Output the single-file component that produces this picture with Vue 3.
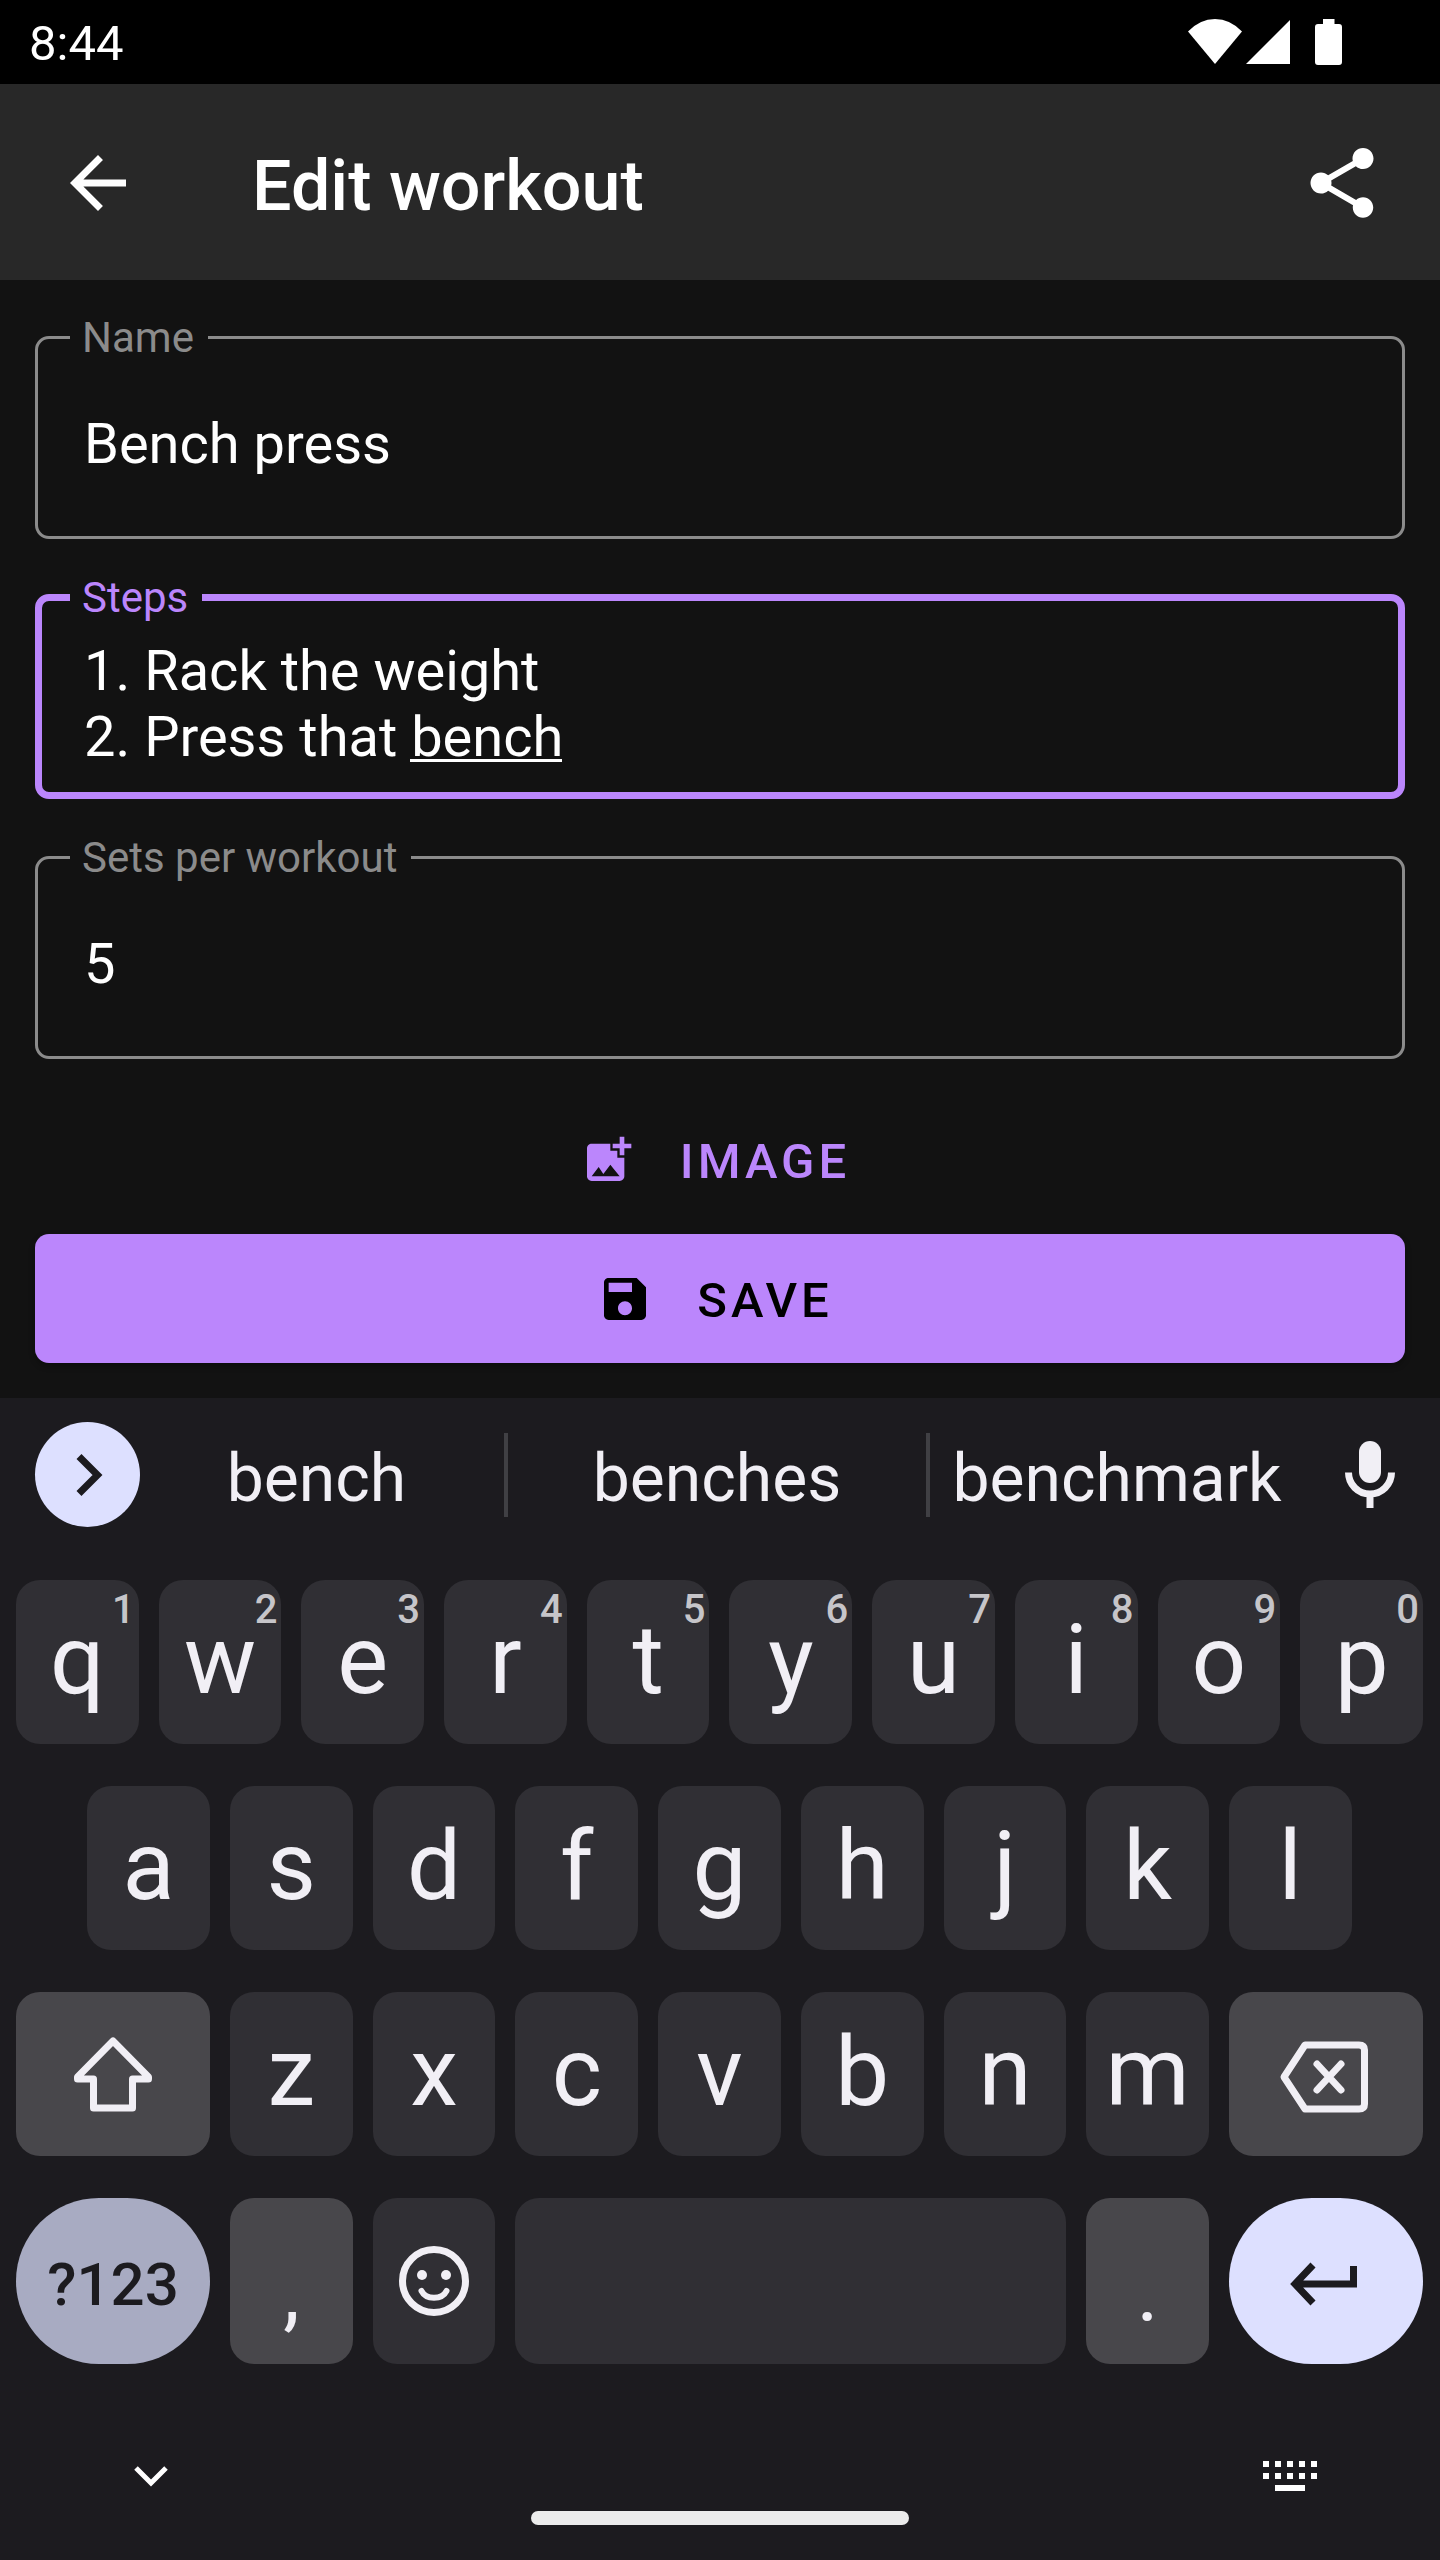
<script setup>
import { ref } from 'vue'

const name = ref('Bench press')
const steps = ref('1. Rack the weight\n2. Press that bench')
const sets = ref('5')

const topRow = [...'qwertyuiop'].map((letter, i) => ({ letter, hint: String((i + 1) % 10) }))
const homeRow = [...'asdfghjkl']
const bottomRow = [...'zxcvbnm']
</script>

<template>
  <div class="screen">
    <div class="status-bar">
      <span class="clock">8:44</span>
      <div class="status-icons">
        <svg width="54" height="46" viewBox="0 0 54 46" fill="#fff"><path d="M27 45 0 12.500Q12 0 27 0T54 12.500Z" /></svg>
        <svg class="signal" width="44" height="46" viewBox="0 0 44 46" fill="#fff"><path d="M44 1V45H0Z" /></svg>
        <svg width="27" height="46" viewBox="0 0 27 46" fill="#fff"><path d="M8 0H19.500V5H24Q27 5 27 8V43Q27 46 24 46H3Q0 46 0 43V8Q0 5 3 5H8Z" /></svg>
      </div>
    </div>

    <header class="app-bar">
      <button class="icon-button" type="button" aria-label="Back">
        <svg width="84" height="84" viewBox="0 0 24 24" fill="#fff"><path d="M20 11H7.830l5.590-5.590L12 4l-8 8 8 8 1.410-1.410L7.830 13H20v-2z" /></svg>
      </button>
      <h1>Edit workout</h1>
      <button class="icon-button" type="button" aria-label="Share">
        <svg width="84" height="84" viewBox="0 0 24 24" fill="#fff"><path d="M18 16.080c-.76 0-1.440.3-1.960.77L8.910 12.700c.05-.23.09-.46.09-.7s-.04-.47-.09-.7l7.050-4.110c.54.5 1.250.81 2.040.81 1.660 0 3-1.340 3-3s-1.340-3-3-3-3 1.340-3 3c0 .24.04.47.09.7L8.040 9.810C7.500 9.310 6.790 9 6 9c-1.660 0-3 1.340-3 3s1.340 3 3 3c.79 0 1.500-.31 2.040-.81l7.120 4.160c-.05.21-.08.43-.08.65 0 1.610 1.310 2.920 2.920 2.920s2.920-1.310 2.920-2.920-1.310-2.920-2.920-2.920z" /></svg>
      </button>
    </header>

    <form class="form" @submit.prevent>
      <fieldset class="field">
        <legend><label for="name">Name</label></legend>
        <input id="name" v-model="name" type="text" />
      </fieldset>
      <fieldset class="field focused">
        <legend><label for="steps">Steps</label></legend>
        <div class="composing">
          <textarea id="steps" v-model="steps" rows="2" spellcheck="false"></textarea>
          <span class="composing-mark"></span>
        </div>
      </fieldset>
      <fieldset class="field">
        <legend><label for="sets">Sets per workout</label></legend>
        <input id="sets" v-model="sets" type="text" inputmode="numeric" />
      </fieldset>
      <div class="actions">
        <button class="action" type="button">
          <svg width="56" height="56" viewBox="0 0 24 24" fill="currentColor"><path d="M19 7v2.990s-1.990.01-2 0V7h-3s.01-1.990 0-2h3V2h2v3h3v2h-3zm-3 4V8h-3V5H5c-1.100 0-2 .9-2 2v12c0 1.100.9 2 2 2h12c1.100 0 2-.9 2-2v-8h-3zM5 19l3-4 2 3 3-4 4 5H5z" /></svg>
          <span>IMAGE</span>
        </button>
        <button class="action save" type="submit">
          <svg width="56" height="56" viewBox="0 0 24 24" fill="currentColor"><path d="M17 3H5c-1.110 0-2 .9-2 2v14c0 1.100.89 2 2 2h14c1.100 0 2-.9 2-2V7l-4-4zm-5 16c-1.660 0-3-1.340-3-3s1.340-3 3-3 3 1.340 3 3-1.340 3-3 3zm3-10H5V5h10v4z" /></svg>
          <span>SAVE</span>
        </button>
      </div>
    </form>

    <section class="keyboard" aria-label="Keyboard">
      <div class="suggestions">
        <button class="expand" type="button" aria-label="More">
          <svg width="105" height="105" viewBox="0 0 105 105" fill="none" stroke="#1c1b1f" stroke-width="7"><path d="M44 34.500 62.500 53 44 71.500" /></svg>
        </button>
        <button class="word" type="button">bench</button>
        <span class="divider"></span>
        <button class="word" type="button">benches</button>
        <span class="divider"></span>
        <button class="word" type="button">benchmark</button>
        <button class="mic" type="button" aria-label="Voice input">
          <svg width="50" height="68" viewBox="0 0 50 68"><rect x="14" width="22" height="42" rx="11" fill="#f1eff5" /><path d="M3.500 31.500A21.500 21.500 0 0 0 46.500 31.500M25 53V67" fill="none" stroke="#f1eff5" stroke-width="7" /></svg>
        </button>
      </div>

      <div class="keys">
        <button v-for="key in topRow" :key="key.letter" class="key" type="button">
          {{ key.letter }}<span class="hint">{{ key.hint }}</span>
        </button>

        <button v-for="letter in homeRow" :key="letter" class="key" :class="{ indent: letter === 'a' }" type="button">{{ letter }}</button>

        <button class="key wide tonal start" type="button" aria-label="Shift">
          <svg width="80" height="76" viewBox="0 0 80 76" fill="none" stroke="#f1eff5" stroke-width="7" stroke-linejoin="round"><path d="M40 5 4.500 41V43H20.500V72H59.500V43H75.500V41Z" /></svg>
        </button>
        <button v-for="letter in bottomRow" :key="letter" class="key" type="button">{{ letter }}</button>
        <button class="key wide tonal edit" type="button" aria-label="Delete">
          <svg width="90" height="72" viewBox="0 0 90 72" fill="none" stroke="#f1eff5" stroke-width="7" stroke-linejoin="round"><path d="M26 4H80Q85.500 4 85.500 9V63Q85.500 68 80 68H26L5 36Z" /><path d="M38 23 62 49M62 23 38 49" stroke-linecap="round" /></svg>
        </button>

        <button class="key wide symbols start" type="button">?123</button>
        <button class="key tonal mark" type="button">,</button>
        <button class="key" type="button" aria-label="Emoji">
          <svg width="72" height="72" viewBox="0 0 72 72" fill="none" stroke="#f1eff5" stroke-width="7"><circle cx="36" cy="36" r="31.500" /><path d="M23.500 46C28 55 44 55 48.500 46" stroke-width="6" stroke-linecap="round" /><g fill="#f1eff5" stroke="none"><circle cx="24" cy="30" r="5" /><circle cx="48" cy="30" r="5" /></g></svg>
        </button>
        <button class="key space" type="button" aria-label="Space"></button>
        <button class="key tonal mark" type="button">.</button>
        <button class="key wide enter edit" type="button" aria-label="Enter">
          <svg width="68" height="44" viewBox="0 0 68 44" fill="none" stroke="#1c1b1f" stroke-width="7"><path d="M63.500 4V22H6M23 3 5 22 23 41" /></svg>
        </button>
      </div>

      <div class="nav-bar">
        <button class="nav-button" type="button" aria-label="Hide keyboard">
          <svg width="36" height="22" viewBox="0 0 36 22" fill="none" stroke="#fff" stroke-width="5"><path d="M3 3 18 18 33 3" /></svg>
        </button>
        <button class="nav-button" type="button" aria-label="Switch keyboard">
          <svg width="54" height="30" viewBox="0 0 54 30" stroke="#fff" stroke-width="6"><path d="M0 3H54M0 15H54" stroke-dasharray="6 6" /><path d="M12 27H42" /></svg>
        </button>
      </div>
      <div class="home-handle"></div>
    </section>
  </div>
</template>

<style>
body {
  margin: 0;
  background: #1c1b1f;
}
</style>

<style scoped>
.screen {
  min-height: 100vh;
  background: #1c1b1f;
  color: #fff;
  font-family: Roboto, "Liberation Sans", sans-serif;
}

button,
input,
textarea {
  box-sizing: border-box;
  margin: 0;
  padding: 0;
  border: 0;
  outline: 0;
  background: none;
  color: inherit;
  font: inherit;
}

svg {
  display: block;
  flex: none;
}

.status-bar {
  display: flex;
  align-items: center;
  justify-content: space-between;
  height: 84px;
  padding: 0 98px 0 29px;
  box-sizing: border-box;
  background: #000;
  font-size: 49px;
}

.clock {
  padding-top: 2px;
}

.status-icons {
  display: flex;
  align-items: center;
}

.signal {
  margin: 0 25px 0 4px;
}

.app-bar {
  display: flex;
  align-items: center;
  box-sizing: border-box;
  height: 196px;
  padding: 2px 56px 0;
  background: #282828;
}

h1 {
  flex: 1;
  margin: 0 0 0 112px;
  padding-top: 6px;
  font-size: 70px;
  font-weight: 500;
  line-height: 84px;
}

.form {
  display: flex;
  flex-direction: column;
  gap: 34px;
  padding: 33px 35px 35px;
  background: #121212;
}

.field {
  min-width: 0;
  margin: 0;
  padding: 49px 32px 59px;
  border: 3px solid #8b8b8b;
  border-radius: 14px;
  color: #8b8b8b;
}

.field.focused {
  padding: 16px 28px 22px;
  border: 7px solid #bb86fc;
  color: #bb86fc;
}

legend {
  padding: 0 14px 0 12px;
  font-size: 42px;
  line-height: 49px;
}

.field input,
.field textarea {
  display: block;
  width: 100%;
  height: 66px;
  padding: 0 14px;
  color: #fff;
  font-size: 56px;
  line-height: 66px;
}

.field textarea {
  height: 132px;
  overflow: hidden;
  resize: none;
}

.composing {
  position: relative;
}

.composing-mark {
  position: absolute;
  left: 340px;
  bottom: 8px;
  width: 152px;
  height: 3px;
  background: #fff;
}

.actions {
  display: flex;
  flex-direction: column;
  gap: 10px;
  padding-top: 2px;
}

.action {
  display: flex;
  align-items: center;
  justify-content: center;
  gap: 44px;
  height: 129px;
  padding-right: 10px;
  border-radius: 14px;
  color: #bb86fc;
  font-size: 49px;
  font-weight: 500;
  letter-spacing: 4px;
}

.action span {
  padding-top: 4px;
}

.action.save {
  background: #bb86fc;
  box-shadow: 0 3px 6px rgba(0, 0, 0, 0.3);
  color: #000;
}

.keyboard {
  color: #f1eff5;
}

.suggestions {
  display: grid;
  grid-template-columns: 129px 375fr 4px 418fr 4px 374fr 136px;
  align-items: center;
  padding: 24px 0 53px;
}

.expand {
  width: 105px;
  height: 105px;
  margin-left: 35px;
  border-radius: 50%;
  background: #dde0ff;
}

.word {
  padding-top: 8px;
  font-size: 66px;
}

.divider {
  height: 84px;
  background: #404044;
}

.mic {
  justify-self: center;
  padding-right: 4px;
}

.keys {
  display: grid;
  grid-template-columns: repeat(20, 1fr);
  grid-template-rows: repeat(3, minmax(164px, auto)) minmax(166px, auto);
  gap: 42px 20px;
  padding: 0 17px 0 16px;
}

.key {
  position: relative;
  display: flex;
  grid-column: span 2;
  align-items: center;
  justify-content: center;
  padding-bottom: 4px;
  border-radius: 24px;
  background: #302f34;
  font-size: 96px;
  line-height: 112px;
}

.key:has(svg) {
  padding-bottom: 0;
}

.key.edit {
  padding: 6px 4px 0 0;
}

.key.indent {
  grid-column: 2 / span 2;
}

.key.wide {
  grid-column: span 3;
}

.key.start {
  grid-column: 1 / span 3;
}

.key.space {
  grid-column: span 8;
}

.key.tonal {
  background: #48474b;
}

.key.mark {
  padding: 24px 0 0;
  font-size: 84px;
}

.key.symbols {
  padding: 8px 0 0;
  border-radius: 84px;
  background: #a8abc2;
  color: #1c1b1f;
  font-size: 60px;
  font-weight: 500;
}

.key.enter {
  border-radius: 84px;
  background: #dde0ff;
}

.hint {
  position: absolute;
  top: 6px;
  right: 4px;
  color: #c6c5c9;
  font-size: 40px;
  font-weight: 500;
  line-height: 48px;
}

.nav-bar {
  display: flex;
  align-items: center;
  justify-content: space-between;
  padding: 84px 108px 0 109px;
}

.nav-button {
  display: flex;
  align-items: center;
  justify-content: center;
  width: 84px;
  height: 56px;
}

.home-handle {
  width: 378px;
  height: 14px;
  margin: 7px auto 35px;
  border-radius: 7px;
  background: #ececec;
}
</style>
